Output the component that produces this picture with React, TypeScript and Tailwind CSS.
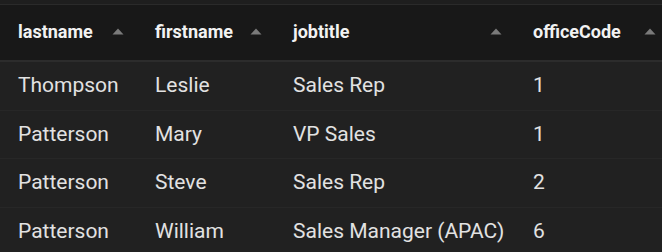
const columns = [
  { key: 'lastname', label: 'lastname', width: 'w-[137px]' },
  { key: 'firstname', label: 'firstname', width: 'w-[138px]' },
  { key: 'jobtitle', label: 'jobtitle', width: 'w-[240px]' },
  { key: 'officeCode', label: 'officeCode', width: 'w-[154px]' },
]

const rows = [
  { lastname: 'Thompson', firstname: 'Leslie', jobtitle: 'Sales Rep', officeCode: '1' },
  { lastname: 'Patterson', firstname: 'Mary', jobtitle: 'VP Sales', officeCode: '1' },
  { lastname: 'Patterson', firstname: 'Steve', jobtitle: 'Sales Rep', officeCode: '2' },
  { lastname: 'Patterson', firstname: 'William', jobtitle: 'Sales Manager (APAC)', officeCode: '6' },
]

function SortArrow() {
  return (
    <svg width="12" height="7" viewBox="0 0 12 7" aria-hidden className="shrink-0">
      <path d="M6 0.5 L11.5 6.5 L0.5 6.5 Z" fill="#7a7a7a" />
    </svg>
  )
}

export default function App() {
  return (
    <div
      className="w-[662px] h-[252px] overflow-hidden bg-[#212121]"
      style={{ fontFamily: 'Roboto, "Noto Sans", sans-serif' }}
    >
      {/* strip above the header */}
      <div className="h-[5px] bg-[#1e1e1e] border-b border-[#2a2a2a]" />

      <div className="flex w-[669px] h-[57px] pb-[3px] bg-[#181818] border-b-[2px] border-[#2c2c2c]">
        {columns.map((c) => (
          <div key={c.key} className={`${c.width} flex items-center justify-between pl-[18px] pr-[13px] shrink-0`}>
            <span className="text-[18px] font-bold text-[#f2f2f2]">{c.label}</span>
            <SortArrow />
          </div>
        ))}
      </div>

      {rows.map((r, i) => (
        <div key={i} className="flex w-[669px] h-[48.5px] border-b border-[#272727]">
          {columns.map((c) => (
            <div key={c.key} className={`${c.width} flex items-center pl-[18px] shrink-0`}>
              <span className="text-[21px] text-[#e2e2e2]">{r[c.key as keyof typeof r]}</span>
            </div>
          ))}
        </div>
      ))}
    </div>
  )
}
